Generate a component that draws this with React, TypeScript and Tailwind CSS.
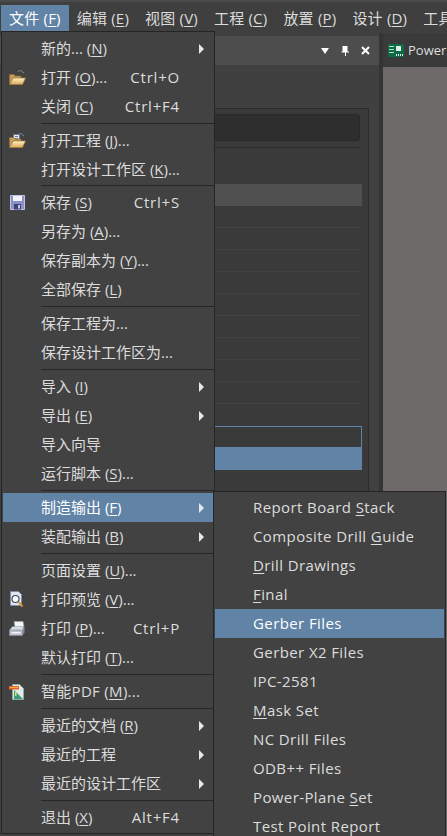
import { Fragment } from 'react'

type Row =
  | { sep: true; tight?: boolean }
  | { sep?: false; label: string; key?: string; after?: string; shortcut?: string; arrow?: boolean; active?: boolean; icon?: string; wide?: boolean }

const fileMenu: Row[] = [
  { label: '新的... (', key: 'N', after: ')', arrow: true },
  { label: '打开 (', key: 'O', after: ')...', shortcut: 'Ctrl+O', icon: 'open' },
  { label: '关闭 (', key: 'C', after: ')', shortcut: 'Ctrl+F4' },
  { sep: true },
  { label: '打开工程 (', key: 'J', after: ')...', icon: 'project' },
  { label: '打开设计工作区 (', key: 'K', after: ')...' },
  { sep: true, tight: true },
  { label: '保存 (', key: 'S', after: ')', shortcut: 'Ctrl+S', icon: 'save' },
  { label: '另存为 (', key: 'A', after: ')...' },
  { label: '保存副本为 (', key: 'Y', after: ')...' },
  { label: '全部保存 (', key: 'L', after: ')' },
  { sep: true },
  { label: '保存工程为...' },
  { label: '保存设计工作区为...' },
  { sep: true },
  { label: '导入 (', key: 'I', after: ')', arrow: true },
  { label: '导出 (', key: 'E', after: ')', arrow: true },
  { label: '导入向导' },
  { label: '运行脚本 (', key: 'S', after: ')...' },
  { sep: true },
  { label: '制造输出 (', key: 'F', after: ')', arrow: true, active: true },
  { label: '装配输出 (', key: 'B', after: ')', arrow: true },
  { sep: true },
  { label: '页面设置 (', key: 'U', after: ')...' },
  { label: '打印预览 (', key: 'V', after: ')...', icon: 'preview' },
  { label: '打印 (', key: 'P', after: ')...', shortcut: 'Ctrl+P', icon: 'print' },
  { label: '默认打印 (', key: 'T', after: ')...' },
  { sep: true },
  { label: '智能PDF (', key: 'M', after: ')...', icon: 'pdf', wide: true },
  { sep: true },
  { label: '最近的文档 (', key: 'R', after: ')', arrow: true },
  { label: '最近的工程', arrow: true },
  { label: '最近的设计工作区', arrow: true },
  { sep: true },
  { label: '退出 (', key: 'X', after: ')', shortcut: 'Alt+F4' },
]

const fabMenu: { pre?: string; key?: string; post?: string; active?: boolean }[] = [
  { pre: 'Report Board ', key: 'S', post: 'tack' },
  { pre: 'Composite Drill ', key: 'G', post: 'uide' },
  { key: 'D', post: 'rill Drawings' },
  { key: 'F', post: 'inal' },
  { pre: 'Gerber Files', active: true },
  { pre: 'Gerber X2 Files' },
  { pre: 'IPC-2581' },
  { key: 'M', post: 'ask Set' },
  { pre: 'NC Drill Files' },
  { pre: 'ODB++ Files' },
  { pre: 'Power-Plane ', key: 'S', post: 'et' },
  { pre: 'Test Point Report' },
]

const topMenus = [
  ['文件', 'F'], ['编辑', 'E'], ['视图', 'V'], ['工程', 'C'], ['放置', 'P'], ['设计', 'D'], ['工具', 'T'],
]

function MenuIcon({ name }: { name: string }) {
  if (name === 'open' || name === 'project') {
    return (
      <svg width="17" height="17" viewBox="0 0 17 17">
        <defs>
          <linearGradient id="folderFront" x1="0" y1="0" x2="0" y2="1">
            <stop offset="0" stopColor="#fff0c4" />
            <stop offset="1" stopColor="#dba95c" />
          </linearGradient>
        </defs>
        <path d="M9 2.500c2-1.500 4-1 5 .5l.5 2" fill="none" stroke="#8aa6bc" strokeWidth="1" strokeDasharray="1.500 1" />
        {name === 'project' && (
          <Fragment>
            <path d="M4.500 2.500h6v6h-6z" fill="#e4e8ee" stroke="#707c92" strokeWidth="1" />
            <path d="M6 4.500h3M6 6.500h3" stroke="#707c92" strokeWidth="1" />
          </Fragment>
        )}
        <path d="M.500 5.500h4.500l1 1.500h6v2H4L2 15.500H.500z" fill="#c89b58" stroke="#8e6f3c" strokeWidth="0.700" />
        <path d="M4 9h12.500L13.500 15.500H1z" fill="url(#folderFront)" stroke="#a5803f" strokeWidth="0.700" />
      </svg>
    )
  }
  if (name === 'save') {
    return (
      <svg className="ml-[1px]" width="15" height="15" viewBox="0 0 15 15">
        <path d="M.500.500h14v14h-14z" fill="#8a90c8" stroke="#bfc3e4" strokeWidth="1" />
        <path d="M3 1h9v5H3z" fill="#f2f3fb" />
        <path d="M4 9h7v5.500H4z" fill="#3f4370" />
        <path d="M8 10h2v3.500H8z" fill="#c9cdea" />
      </svg>
    )
  }
  if (name === 'preview') {
    return (
      <svg className="ml-[1px]" width="14" height="17" viewBox="0 0 14 17">
        <path d="M.500.500h8l3 3v11h-11z" fill="#dfe4f0" stroke="#7f8ca6" strokeWidth="1" />
        <circle cx="5.500" cy="8" r="3.500" fill="#f9fbfd" stroke="#3f4a5c" strokeWidth="1.200" />
        <path d="M8.500 11l4 4.500" stroke="#d8983a" strokeWidth="2" />
      </svg>
    )
  }
  if (name === 'print') {
    return (
      <svg width="16" height="15" viewBox="0 0 16 15">
        <path d="M5 .500h9l1 5H6z" fill="#f4f5f8" stroke="#9aa2ae" strokeWidth="0.700" />
        <path d="M.500 9l3-3.500h11V9z" fill="#d9dde3" />
        <path d="M.500 9h13v5.500H.500z" fill="#bcc2cc" stroke="#868d99" strokeWidth="0.700" />
        <path d="M13.500 9l2-3.500v6l-2 3z" fill="#858b96" />
        <path d="M2.500 11h9v1.500h-9z" fill="#f0f2f5" />
      </svg>
    )
  }
  return (
    <svg width="16" height="16" viewBox="0 0 16 16">
      <path d="M3.500.500h7l4 4v11h-11z" fill="#e2ebe8" stroke="#8ea8a4" strokeWidth="1" />
      <path d="M5 15V6l9 9z" fill="#3f9a7c" />
      <path d="M6 8h1.500v4H6z" fill="#d8e86a" />
      <path d="M0 2h10v3.500H0z" fill="#e8622a" />
      <path d="M1 3h8v1H1z" fill="#f6b04a" />
    </svg>
  )
}

function MenuRow({ row }: { row: Extract<Row, { label: string }> }) {
  return (
    <div className={`mx-[1px] flex h-[29px] items-center ${row.active ? 'bg-[#6083a6] text-white' : ''}`}>
      <div className="flex w-[38px] shrink-0 pl-[6px]">{row.icon && <MenuIcon name={row.icon} />}</div>
      <span className={`whitespace-pre ${row.wide ? 'tracking-[0.3px]' : ''}`}>
        {row.label}
        {row.key && <u className="underline-offset-2">{row.key}</u>}
        {row.after}
      </span>
      {row.shortcut && <span className="ml-auto mr-[33px] tracking-[0.8px]">{row.shortcut}</span>}
      {row.arrow && <span className="ml-auto mr-[9px] h-0 w-0 border-y-[5px] border-l-[5px] border-y-transparent border-l-[#e8e8e8]" />}
    </div>
  )
}

export default function App() {
  return (
    <div className="relative flex h-[836px] w-[447px] flex-col overflow-hidden bg-[#3a3a3a] text-[15px] leading-none text-[#dcdcdc] font-['Open_Sans','Noto_Sans_CJK_SC',sans-serif]">
      {/* menu bar */}
      <div className="flex h-[33px] shrink-0 items-start overflow-hidden border-t-2 border-[#4a4a4a] bg-[#3f3f3f] pl-[1px] pt-[3px]">
        {topMenus.map(([name, key], i) => (
          <div key={name} className={`flex h-[26px] shrink-0 items-center whitespace-pre px-[8px] tracking-[0.2px] ${i === 0 ? 'bg-[#6083a6] text-white' : ''}`}>
            {name} (<u className="underline-offset-2">{key}</u>)
          </div>
        ))}
      </div>

      {/* docked panel and document behind the menus */}
      <div className="flex min-h-0 flex-1">
        <div className="flex w-[379px] shrink-0 flex-col bg-[#404040] pt-[3px]">
          <div className="flex h-[29px] shrink-0 items-center justify-end gap-[12px] bg-[#4d4d4d] pr-[9px]">
            <span className="h-0 w-0 border-x-[4px] border-t-[6px] border-x-transparent border-t-white" />
            <svg width="8" height="10" viewBox="0 0 8 10">
              <path d="M1.500 0h5v5.500h1.500v1h-3v3.500h-1v-3.500h-3.500v-1h1z" fill="#fff" />
            </svg>
            <svg width="9" height="9" viewBox="0 0 9 9">
              <path d="M1 1l7 7M8 1l-7 7" stroke="#fff" strokeWidth="2" />
            </svg>
          </div>
          <div className="flex min-h-0 flex-1 flex-col pb-[10px] pl-[10px] pr-[10px] pt-[43px]">
            <div className="flex flex-1 flex-col border border-b-0 border-[#2b2b2b] bg-[#3a3a3a] pl-[4px] pr-[6px] pt-[5px]">
              <div className="mr-[2px] h-[27px] shrink-0 rounded-[3px] border border-[#292929] bg-[#2e2e2e]" />
              <div className="mr-[2px] mt-[6px] h-px shrink-0 bg-[#2b2b2b]" />
              <div className="mt-[36px] h-[22px] shrink-0 bg-[#505050]" />
              {Array.from({ length: 10 }).map((_, i) => (
                <div key={i} className={`h-[22px] shrink-0 ${i < 9 ? 'border-b border-[#414141]' : ''}`} />
              ))}
              <div className="h-[21px] shrink-0 border border-b-0 border-[#6083a6]" />
              <div className="h-[23px] shrink-0 bg-[#6083a6]" />
            </div>
          </div>
        </div>
        <div className="w-[4px] shrink-0 bg-[#353535]" />
        <div className="flex min-w-0 flex-1 flex-col">
          <div className="flex h-[34px] shrink-0 items-center gap-[4px] overflow-hidden pl-[5px]">
            <svg className="shrink-0" width="16" height="13" viewBox="0 0 16 13">
              <path d="M0 0h16v13H0z" fill="#0f6b45" />
              <path d="M1 2h5v1H1zM1 5h5v1H1zM1 8h5v1H1z" fill="#b8e0c8" />
              <path d="M8 2h5v5H8z" fill="#dfeee6" />
              <path d="M8 10h1v2H8zM10 10h1v2h-1zM12 10h1v2h-1zM14 10h1v2h-1z" fill="#dfeee6" />
            </svg>
            <span className="whitespace-nowrap text-[13px]">Power.</span>
          </div>
          <div className="flex-1 bg-[#6e6a69]" />
        </div>
      </div>

      {/* file menu */}
      <div className="absolute left-[1px] top-[31px] h-[803px] w-[214px] border border-[#252525] bg-[#424242] pt-[2px]">
        {fileMenu.map((row, i) =>
          row.sep ? (
            <div key={i} className={`ml-[39px] ${row.tight ? 'h-[4px] pt-[1px]' : 'h-[5px] pt-[2px]'}`}>
              <div className="h-px bg-[#262626]" />
            </div>
          ) : (
            <MenuRow key={i} row={row} />
          ),
        )}
      </div>

      {/* fabrication outputs submenu */}
      <div className="absolute left-[213px] top-[491px] h-[350px] w-[233px] border border-[#252525] bg-[#424242] pt-[1px]">
        {fabMenu.map((item, i) => (
          <div key={i} className={`mx-[1px] flex h-[29px] items-center whitespace-pre pl-[38px] tracking-[0.4px] ${item.active ? 'bg-[#6083a6] text-white' : ''}`}>
            <span>
              {item.pre}
              {item.key && <u className="underline-offset-2">{item.key}</u>}
              {item.post}
            </span>
          </div>
        ))}
      </div>
    </div>
  )
}
